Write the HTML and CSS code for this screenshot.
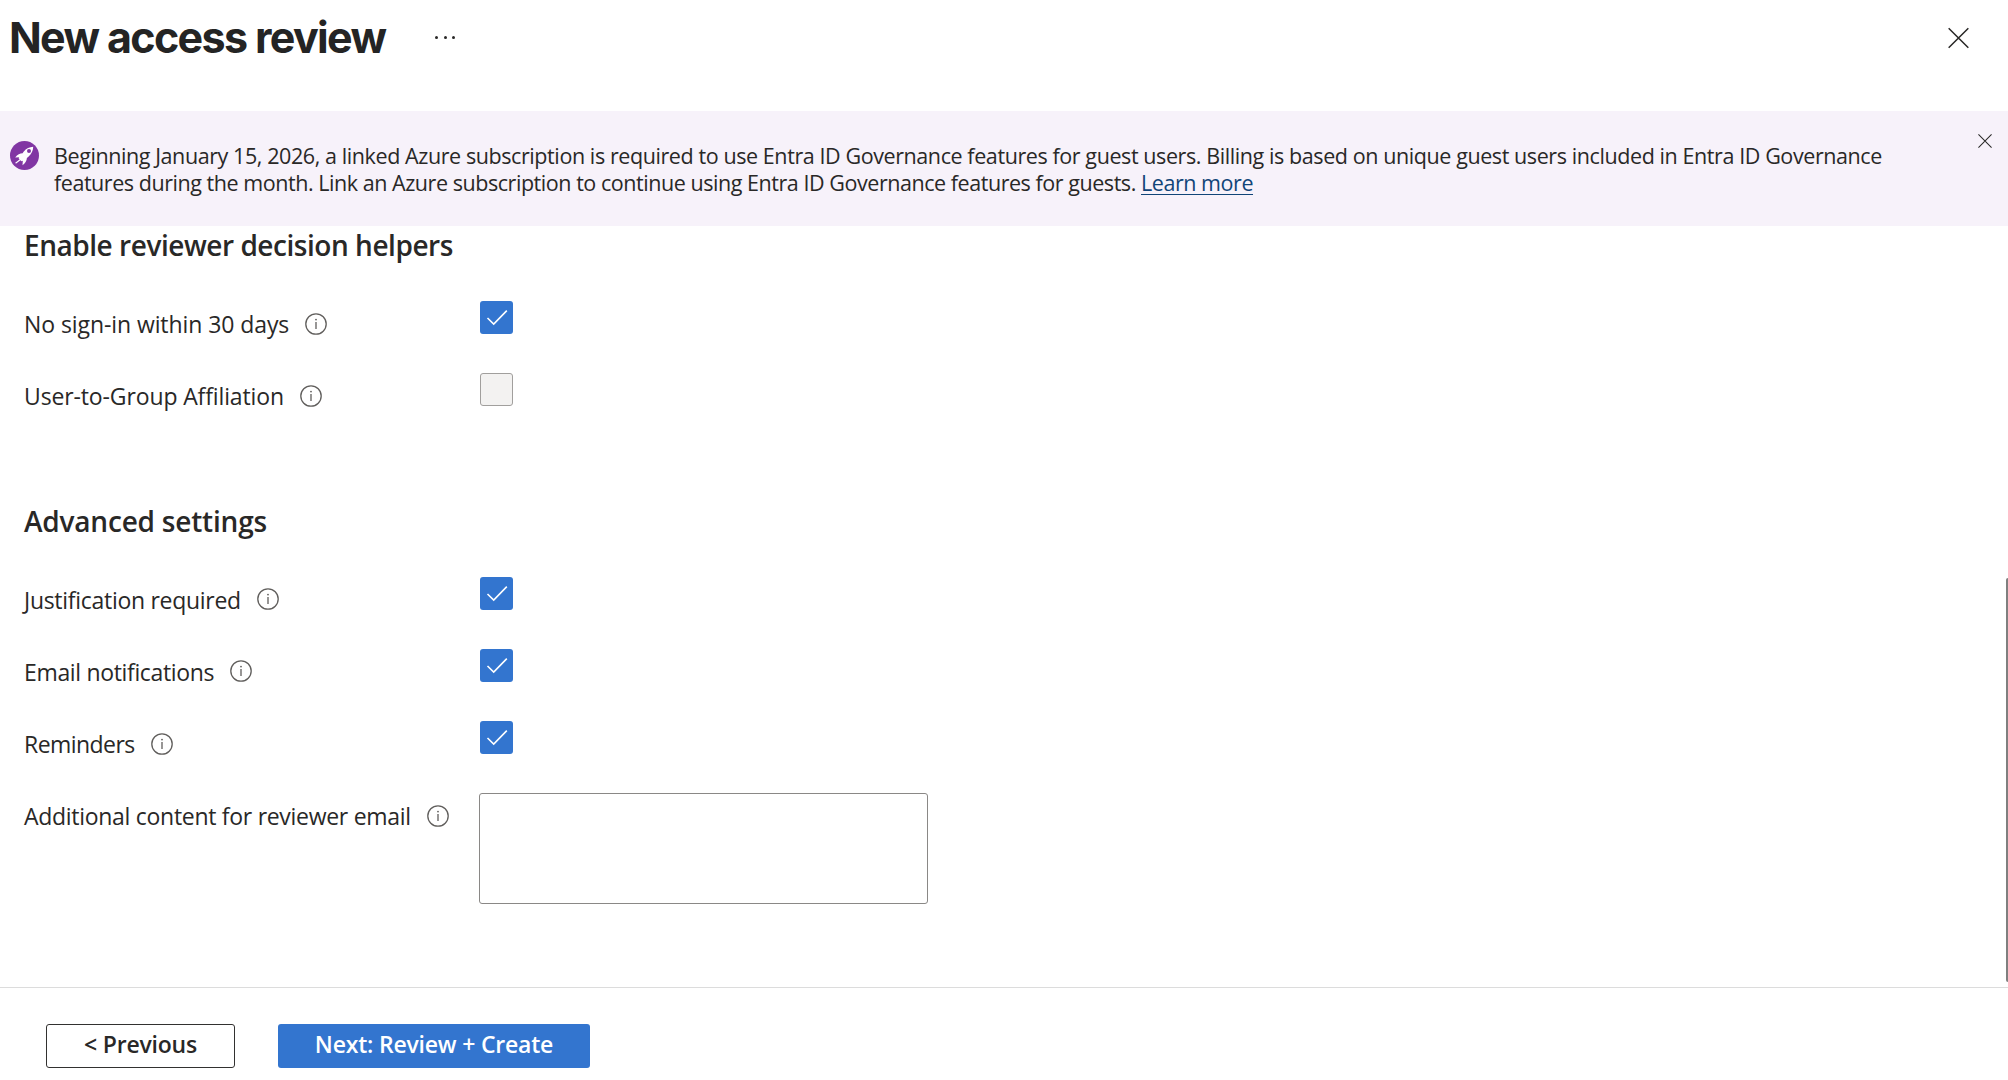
FILE: index.html
```html
<!DOCTYPE html>
<html lang="en">
<head>
<meta charset="UTF-8" />
<meta name="viewport" content="width=device-width, initial-scale=1" />
<title>New access review</title>
<link rel="stylesheet" href="styles.css">
</head>
<body>

<!-- shared icons -->
<svg class="sprite" width="0" height="0">
  <symbol id="info" viewBox="0 0 22 22">
    <circle cx="11" cy="11" r="10.2" fill="none" stroke="#605e5c" stroke-width="1.3" />
    <path d="M11 9v7" stroke="#605e5c" stroke-width="1.3" />
    <circle cx="11" cy="6.6" r="0.9" fill="#605e5c" />
  </symbol>
  <symbol id="close" viewBox="0 0 22 22">
    <path d="M0.7 0.7L21.3 21.3M21.3 0.7L0.7 21.3" fill="none" stroke="currentColor" stroke-width="1.6" />
  </symbol>
  <symbol id="check" viewBox="0 0 33 33">
    <path d="M7.5 17L13.7 23L26.8 9.6" fill="none" stroke="#fff" stroke-width="1.6" />
  </symbol>
</svg>

<header class="title-bar">
  <h1>New access review</h1>
  <button class="more" aria-label="More"><i></i><i></i><i></i></button>
  <button class="close" aria-label="Close"><svg><use href="#close" /></svg></button>
</header>

<div class="banner">
  <svg class="rocket" viewBox="0 0 29 29">
    <circle cx="14.5" cy="14.5" r="14.5" fill="#8136a3" />
    <path fill="#fff" fill-rule="evenodd" d="M23.2 5.8C19.6 6 16.2 7.6 13.6 10.7L12.6 12.2C10 12.2 7.5 13.4 5.2 16.6L9.2 16.2L8.6 17.3L9.7 18.3L5 22.1L6.2 22.6L10.5 19.2L11.5 20.2L12.8 19.7L12.5 24.3C15.1 22.2 16.8 19.6 16.9 16.9L18.4 15.7C21.6 12.9 23.2 9.3 23.2 5.8ZM19 8A2 2 0 1 1 19 12A2 2 0 1 1 19 8Z" />
  </svg>
  <p>Beginning January 15, 2026, a linked Azure subscription is required to use Entra ID Governance features for guest users. Billing is based on unique guest users included in Entra ID Governance<br><span class="second-line">features during the month. Link an Azure subscription to continue using Entra ID Governance features for guests. <a href="#">Learn more</a></span></p>
  <button class="dismiss" aria-label="Dismiss"><svg><use href="#close" /></svg></button>
</div>

<main class="content">
  <section>
    <h2>Enable reviewer decision helpers</h2>
    <div class="row">
      <label><span class="signin">No sign-in within 30 days</span><svg class="info"><use href="#info" /></svg></label>
      <div class="checkbox checked"><svg><use href="#check" /></svg></div>
    </div>
    <div class="row">
      <label><span class="affiliation">User-to-Group Affiliation</span><svg class="info"><use href="#info" /></svg></label>
      <div class="checkbox"></div>
    </div>
  </section>

  <section class="advanced">
    <h2>Advanced settings</h2>
    <div class="row">
      <label><span class="justification">Justification required</span><svg class="info"><use href="#info" /></svg></label>
      <div class="checkbox checked"><svg><use href="#check" /></svg></div>
    </div>
    <div class="row">
      <label><span class="email">Email notifications</span><svg class="info"><use href="#info" /></svg></label>
      <div class="checkbox checked"><svg><use href="#check" /></svg></div>
    </div>
    <div class="row">
      <label><span class="reminders">Reminders</span><svg class="info"><use href="#info" /></svg></label>
      <div class="checkbox checked"><svg><use href="#check" /></svg></div>
    </div>
    <div class="row">
      <label><span class="additional">Additional content for reviewer email</span><svg class="info"><use href="#info" /></svg></label>
      <textarea></textarea>
    </div>
  </section>
  <div class="scroll-thumb"></div>
</main>

<footer class="actions">
  <button class="previous">&lt; Previous</button>
  <button class="next">Next: Review + Create</button>
</footer>

</body>
</html>
```
FILE: styles.css
```css
* { box-sizing: border-box; }
body {
  margin: 0;
  height: 1080px;
  display: flex;
  flex-direction: column;
  overflow: hidden;
  background: #fff;
  color: #292827;
  font-family: "Open Sans", "Noto Sans", sans-serif;
  font-size: 23px;
}
h1, h2, p { margin: 0; }
button { padding: 0; border: 0; background: none; color: inherit; font: inherit; cursor: pointer; }
svg { display: block; }
.sprite { position: absolute; }

.title-bar {
  height: 111px;
  display: flex;
  align-items: flex-start;
  padding: 0 39px 0 9px;
}
h1 {
  width: 426px;
  padding-top: 11px;
  font-family: Inter, sans-serif;
  font-size: 43px;
  line-height: 52px;
  font-weight: 700;
  letter-spacing: -1.65px;
  color: #242424;
  white-space: nowrap;
}
.more { display: flex; gap: 5.5px; margin-top: 36px; }
.more i { width: 3px; height: 3px; border-radius: 50%; background: #292827; }
.close { margin: 27px 0 0 auto; }
.close svg { width: 21px; height: 22px; }

.banner {
  height: 115px;
  display: flex;
  align-items: flex-start;
  padding: 0 16px 0 10px;
  background: #f7f2fa;
}
.rocket { width: 29px; height: 29px; margin: 30px 15px 0 0; }
.banner p {
  padding-top: 31px;
  font-size: 21.5px;
  line-height: 27px;
  letter-spacing: -0.41px;
  white-space: nowrap;
}
.second-line { letter-spacing: -0.45px; }
.banner a { color: #114578; text-decoration-thickness: 1px; text-underline-offset: 3px; }
.dismiss { margin: 23px 0 0 auto; }
.dismiss svg { width: 14px; height: 14px; }

.content { position: relative; height: 761px; padding-left: 24px; }
h2 {
  height: 75px;
  font-size: 28px;
  line-height: 38px;
  font-weight: 600;
  letter-spacing: -0.46px;
  white-space: nowrap;
}
.advanced { padding-top: 56px; }
.advanced h2 { letter-spacing: -0.2px; }
.row {
  height: 72.3px;
  display: grid;
  grid-template-columns: 456px auto;
  justify-content: start;
  align-items: start;
}
label { display: flex; gap: 16px; padding-top: 7px; line-height: 32px; white-space: nowrap; }
.signin { letter-spacing: -0.08px; }
.affiliation { letter-spacing: -0.13px; }
.justification { letter-spacing: -0.29px; }
.email { letter-spacing: -0.34px; }
.reminders { letter-spacing: -0.55px; }
.additional { letter-spacing: -0.29px; }
.info { width: 22px; height: 22px; margin-top: 4.5px; }
.checkbox {
  width: 33px;
  height: 33px;
  border: 1px solid #a19f9d;
  border-radius: 3px;
  background: #f3f2f1;
}
.checked { border: 0; background: #3375cf; }
.checked svg { width: 33px; height: 33px; }
textarea {
  width: 449px;
  height: 111px;
  margin-left: -1px;
  border: 1px solid #8a8886;
  border-radius: 3px;
  background: #fff;
  resize: none;
}
.scroll-thumb {
  position: absolute;
  top: 352px;
  right: 0;
  width: 2px;
  height: 404px;
  border-radius: 2px 0 0 2px;
  background: #7f7f7f;
}

.actions {
  flex: 1;
  display: flex;
  align-items: flex-start;
  gap: 43px;
  padding: 36px 0 0 46px;
  border-top: 1px solid #dcdcdc;
}
.actions button {
  height: 44px;
  padding-bottom: 4px;
  border-radius: 3px;
  font-weight: 600;
  line-height: 38px;
  letter-spacing: -0.2px;
  white-space: nowrap;
}
.actions .previous { width: 189px; border: 1px solid #323130; }
.actions .next { width: 312px; background: #3375cf; color: #fff; }
```
